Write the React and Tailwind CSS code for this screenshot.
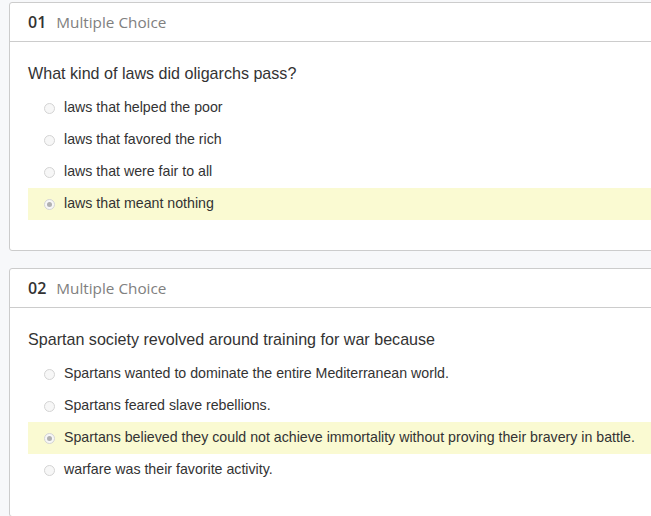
import React from 'react';

const questions = [
  {
    num: '01',
    text: 'What kind of laws did oligarchs pass?',
    options: [
      'laws that helped the poor',
      'laws that favored the rich',
      'laws that were fair to all',
      'laws that meant nothing',
    ],
    selected: 3,
  },
  {
    num: '02',
    text: 'Spartan society revolved around training for war because',
    options: [
      'Spartans wanted to dominate the entire Mediterranean world.',
      'Spartans feared slave rebellions.',
      'Spartans believed they could not achieve immortality without proving their bravery in battle.',
      'warfare was their favorite activity.',
    ],
    selected: 2,
  },
];

function Radio({ checked }) {
  return (
    <span className="w-[11px] h-[11px] rounded-full border border-[#d4d4d4] bg-[#f7f7f7] flex items-center justify-center shrink-0">
      {checked && <span className="w-[5px] h-[5px] rounded-full bg-[#b0b0b0]" />}
    </span>
  );
}

function QuestionCard({ q }) {
  return (
    <div className="w-[700px] bg-white border border-[#cccccc] rounded-[3px]">
      <div className="h-[39px] border-b border-[#cccccc] flex items-center pl-[18px] font-['Open_Sans',sans-serif]">
        <span className="text-[16px] text-[#333] font-semibold">{q.num}</span>
        <span className="text-[15.3px] text-[#808080] ml-[10px]">Multiple Choice</span>
      </div>
      <div className="pt-[21px] pb-[30px] pl-[18px] font-['Liberation_Sans',Arial,sans-serif]">
        <div className="text-[16.1px] leading-[20px] text-[#333] mb-[9px]">{q.text}</div>
        {q.options.map((opt, i) => (
          <div
            key={i}
            className={
              i === q.selected
                ? 'h-[32px] flex items-center pl-[16px] bg-[#fafad2]'
                : 'h-[32px] flex items-center pl-[16px]'
            }
          >
            <Radio checked={i === q.selected} />
            <span className="ml-[9px] text-[14.2px] text-[#333] whitespace-nowrap">{opt}</span>
          </div>
        ))}
      </div>
    </div>
  );
}

export default function App() {
  return (
    <div className="w-full h-[516px] overflow-hidden bg-[#f7f8fa]">
      <div className="pl-[9px] pt-[2px] flex flex-col gap-[17px]">
        {questions.map((q) => (
          <QuestionCard key={q.num} q={q} />
        ))}
      </div>
    </div>
  );
}
